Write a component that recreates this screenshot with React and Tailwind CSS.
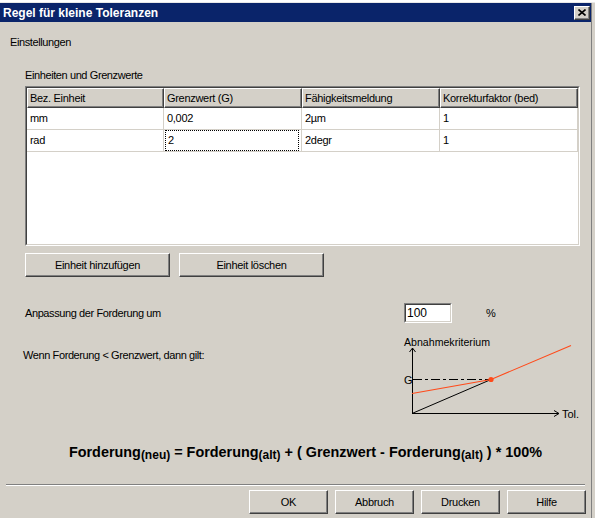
import React from 'react';

const font = { fontFamily: '"Liberation Sans", Arial, sans-serif' };

function Btn({ children, className = '' }) {
  return (
    <div
      className={`flex items-center justify-center bg-[#d4d0c8] border border-t-white border-l-white border-r-[#404040] border-b-[#404040] shadow-[inset_-1px_-1px_0_#808080] text-[11px] tracking-[-0.3px] text-black ${className}`}
    >
      {children}
    </div>
  );
}

const cols = ['w-[137px]', 'w-[138px]', 'w-[138px]', 'w-[138px]'];
const header = ['Bez. Einheit', 'Grenzwert (G)', 'Fähigkeitsmeldung', 'Korrekturfaktor (bed)'];
const rows = [
  ['mm', '0,002', '2µm', '1'],
  ['rad', '2', '2degr', '1'],
];

function Chart() {
  return (
    <svg width="192" height="90" viewBox="0 0 192 90" className="block">
      <text x="6" y="11" fontSize="10.6" fontFamily="Liberation Sans, Arial, sans-serif" fill="#000">
        Abnahmekriterium
      </text>
      <line x1="14.5" y1="13" x2="14.5" y2="78.5" stroke="#000" strokeWidth="1" />
      <polyline points="11.5,17 14.5,13 17.5,17" fill="none" stroke="#000" strokeWidth="1" />
      <line x1="14" y1="78.5" x2="161" y2="78.5" stroke="#000" strokeWidth="1" />
      <polyline points="156,75.5 161,78.5 156,81.5" fill="none" stroke="#000" strokeWidth="1" />
      <text x="164" y="83" fontSize="11" fontFamily="Liberation Sans, Arial, sans-serif" fill="#000">
        Tol.
      </text>
      <text x="6" y="49" fontSize="11" fontFamily="Liberation Sans, Arial, sans-serif" fill="#000">
        G
      </text>
      <line x1="15" y1="44.5" x2="93" y2="44.5" stroke="#000" strokeWidth="1" strokeDasharray="9 3 3 3" />
      <line x1="14" y1="78.5" x2="93" y2="44.5" stroke="#000" strokeWidth="1" />
      <polyline points="14,58.5 93,44.5 173,10.5" fill="none" stroke="#ff4a1a" strokeWidth="1.1" />
      <circle cx="93" cy="44.5" r="2.6" fill="#ff4a1a" />
    </svg>
  );
}

export default function App() {
  return (
    <div className="w-[595px] h-[518px] bg-[#d4d0c8] overflow-hidden text-black" style={font}>
      <div className="h-[3px] bg-white border-b border-[#e8e8e8]" />
      <div className="w-[592px] h-[515px] border-r border-[#808080] flex flex-col">
        {/* title bar */}
        <div className="h-[19px] bg-[#0a246a] flex items-center justify-between pl-[3px] pr-[1px]">
          <span className="text-white font-bold text-[12px] leading-none">Regel für kleine Toleranzen</span>
          <div className="w-[16px] h-[14px] bg-[#d4d0c8] border border-t-white border-l-white border-r-[#404040] border-b-[#404040] shadow-[inset_-1px_-1px_0_#808080] flex items-center justify-center">
            <svg width="8" height="7" viewBox="0 0 8 7">
              <path d="M0.5 0.5 L7.5 6.5 M7.5 0.5 L0.5 6.5" stroke="#000" strokeWidth="1.6" />
            </svg>
          </div>
        </div>

        <div className="text-[11px] tracking-[-0.4px] leading-[13px] mt-[14px] pl-[10px]">Einstellungen</div>
        <div className="text-[11px] tracking-[-0.4px] leading-[13px] mt-[20px] pl-[25px]">Einheiten und Grenzwerte</div>

        {/* table */}
        <div className="ml-[25px] mt-[4px] w-[555px] h-[160px] border border-t-[#808080] border-l-[#808080] border-r-white border-b-white">
          <div className="w-full h-full bg-white border border-t-[#404040] border-l-[#404040] border-r-[#d4d0c8] border-b-[#d4d0c8] overflow-hidden">
            <div className="flex h-[20px]">
              {header.map((h, i) => (
                <div
                  key={h}
                  className={`${cols[i]} h-full bg-[#d4d0c8] border border-t-white border-l-white border-r-[#404040] border-b-[#404040] shadow-[inset_-1px_-1px_0_#808080] flex items-center pl-[2px] text-[11px] tracking-[-0.3px]`}
                >
                  {h}
                </div>
              ))}
            </div>
            {rows.map((r, ri) => (
              <div key={ri} className="flex h-[22px]">
                {r.map((c, ci) => (
                  <div
                    key={ci}
                    className={`${cols[ci]} h-full border-r border-b border-[#d4d0c8] flex items-center pl-[3px] text-[11px] tracking-[-0.3px]`}
                  >
                    {ri === 1 && ci === 1 ? (
                      <div className="w-full h-full border border-dotted border-black -ml-[2px] pl-[2px] flex items-center">{c}</div>
                    ) : (
                      c
                    )}
                  </div>
                ))}
              </div>
            ))}
          </div>
        </div>

        <div className="flex gap-[9px] ml-[25px] mt-[7px]">
          <Btn className="w-[145px] h-[24px]">Einheit hinzufügen</Btn>
          <Btn className="w-[145px] h-[24px]">Einheit löschen</Btn>
        </div>

        {/* Anpassung */}
        <div className="flex items-center mt-[26px] pl-[25px] h-[20px]">
          <div className="w-[379px] text-[11px] tracking-[-0.4px]">Anpassung der Forderung um</div>
          <div className="w-[48px] h-[20px] border border-t-[#808080] border-l-[#808080] border-r-white border-b-white">
            <div className="w-full h-full bg-white border border-t-[#404040] border-l-[#404040] border-r-[#d4d0c8] border-b-[#d4d0c8] flex items-center pl-[1px] text-[12px]">
              100
            </div>
          </div>
          <div className="ml-[34px] text-[11px]">%</div>
        </div>

        {/* chart row */}
        <div className="flex mt-[12px] h-[90px]">
          <div className="w-[398px] pl-[23px] pt-[14px] text-[11px] tracking-[-0.4px] leading-[13px]">
            Wenn Forderung &lt; Grenzwert, dann gilt:
          </div>
          <Chart />
        </div>

        {/* formula */}
        <div className="mt-[19px] h-[16px] flex items-center justify-center pl-[20px] font-bold text-[14.4px] leading-[16px] whitespace-pre">
          <span>Forderung</span>
          <span className="text-[12px] relative top-[3px]">(neu)</span>
          <span> = Forderung</span>
          <span className="text-[12px] relative top-[3px]">(alt)</span>
          <span> + ( Grenzwert - Forderung</span>
          <span className="text-[12px] relative top-[3px]">(alt)</span>
          <span> ) * 100%</span>
        </div>

        {/* separator */}
        <div className="mt-[24px] mx-[6px] border-t border-[#808080] border-b border-b-white" />

        <div className="flex justify-end gap-[7px] mt-[4px] pr-[5px]">
          <Btn className="w-[79px] h-[24px]">OK</Btn>
          <Btn className="w-[79px] h-[24px]">Abbruch</Btn>
          <Btn className="w-[79px] h-[24px]">Drucken</Btn>
          <Btn className="w-[79px] h-[24px]">Hilfe</Btn>
        </div>
      </div>
    </div>
  );
}
